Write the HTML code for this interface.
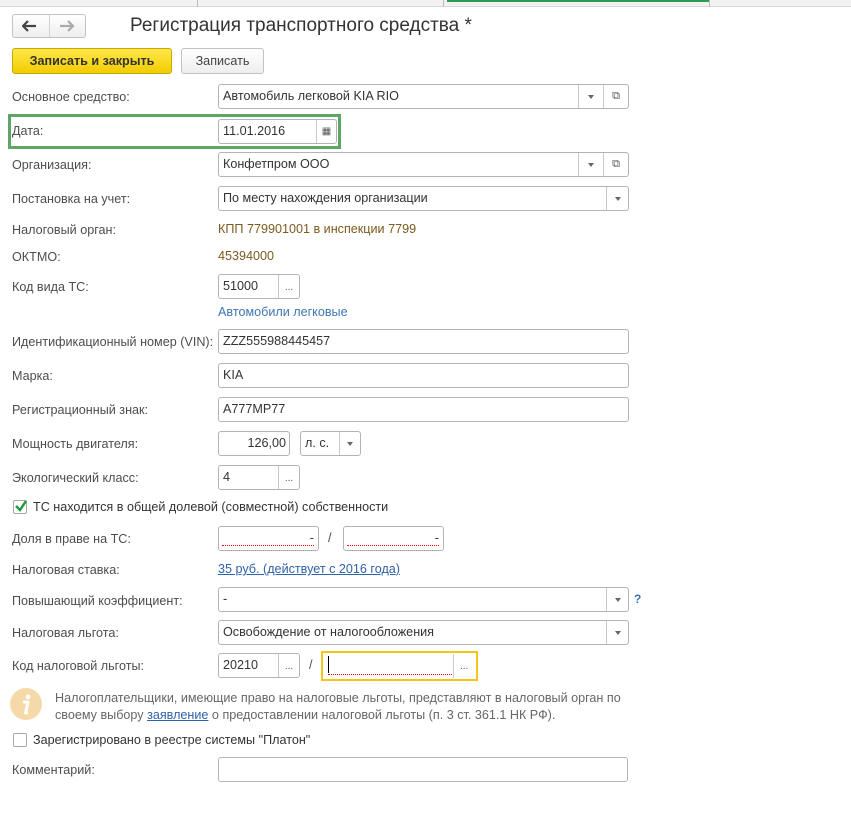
<!DOCTYPE html>
<html><head><meta charset="utf-8"><style>
*{box-sizing:border-box}
body{margin:0;width:851px;height:813px;background:#fff;font-family:"Liberation Sans",Arial,sans-serif;font-size:12.6px;color:#4d4d4d;position:relative;overflow:hidden}
.a{position:absolute}
.l{position:absolute;left:12px;line-height:16px;color:#4d4d4d}
.in{position:absolute;height:25px;border:1px solid #b3b3b3;border-radius:3px;background:#fff;color:#333;line-height:23px;padding-left:4px;white-space:nowrap;overflow:hidden}
.bt{position:absolute;top:0;bottom:0;border-left:1px solid #c8c8c8;text-align:center;color:#555}
.tri{display:inline-block;width:0;height:0;border-left:3px solid transparent;border-right:3px solid transparent;border-top:4px solid #666;vertical-align:middle}
.dots{font-size:10px;color:#555}
.br{color:#7b5a1e}
.lk{color:#3d76b4}
.red{position:absolute;left:3px;right:4px;bottom:4px;border-bottom:1px dotted #e00}
</style></head><body>
<div class="a" style="left:0;top:0;width:851px;height:7px;background:#f2f2f2;border-bottom:1px solid #d8d8d8"></div>
<div class="a" style="left:197px;top:0;width:1px;height:7px;background:#bbb"></div>
<div class="a" style="left:443px;top:0;width:1px;height:7px;background:#bbb"></div>
<div class="a" style="left:447px;top:0;width:262px;height:2px;background:#2e9c4e"></div>
<div class="a" style="left:709px;top:0;width:1px;height:7px;background:#bbb"></div>
<div class="a" style="left:12px;top:14px;width:74px;height:24px;border:1px solid #c3c3c3;border-radius:3px;background:linear-gradient(#fff,#eee)"></div>
<div class="a" style="left:49px;top:15px;width:1px;height:22px;background:#d0d0d0"></div>
<svg class="a" style="left:22px;top:20px" width="18" height="12"><path d="M1 6H14M6 1L1 6L6 11" stroke="#444" stroke-width="2.2" fill="none"/></svg>
<svg class="a" style="left:58px;top:20px" width="18" height="12"><path d="M2 6H15M10 1L15 6L10 11" stroke="#aaa" stroke-width="2.2" fill="none"/></svg>
<div class="a" style="left:130px;top:14px;font-size:19px;color:#333;line-height:24px">Регистрация транспортного средства *</div>
<div class="a" style="left:12px;top:48px;width:160px;height:26px;border:1px solid #c9a800;border-radius:3px;background:linear-gradient(#ffe84a,#f2cc00);text-align:center;line-height:24px;font-weight:bold;color:#333">Записать и закрыть</div>
<div class="a" style="left:181px;top:48px;width:83px;height:26px;border:1px solid #c3c3c3;border-radius:3px;background:linear-gradient(#fff,#eee);text-align:center;line-height:24px;color:#444">Записать</div>

<div class="l" style="top:89px">Основное средство:</div>
<div class="in" style="left:218px;top:84px;width:411px">Автомобиль легковой KIA RIO<div class="bt" style="right:25px;width:25px"><span class="tri"></span></div><div class="bt" style="right:0;width:25px;font-size:11px">&#10697;</div></div>

<div class="a" style="left:8px;top:114px;width:333px;height:35px;border:3px solid #5fa565"></div>
<div class="l" style="top:123px">Дата:</div>
<div class="in" style="left:218px;top:119px;width:119px">11.01.2016<div class="bt" style="right:0;width:20px;font-size:10px">&#9638;</div></div>

<div class="l" style="top:157px">Организация:</div>
<div class="in" style="left:218px;top:152px;width:411px">Конфетпром ООО<div class="bt" style="right:25px;width:25px"><span class="tri"></span></div><div class="bt" style="right:0;width:25px;font-size:11px">&#10697;</div></div>

<div class="l" style="top:191px">Постановка на учет:</div>
<div class="in" style="left:218px;top:186px;width:411px">По месту нахождения организации<div class="bt" style="right:0;width:22px"><span class="tri"></span></div></div>

<div class="l" style="top:222px">Налоговый орган:</div>
<div class="a br" style="left:218px;top:222px">КПП 779901001 в инспекции 7799</div>
<div class="l" style="top:249px">ОКТМО:</div>
<div class="a br" style="left:218px;top:249px">45394000</div>

<div class="l" style="top:279px">Код вида ТС:</div>
<div class="in" style="left:218px;top:274px;width:82px">51000<div class="bt" style="right:0;width:21px"><span class="dots">...</span></div></div>
<div class="a lk" style="left:218px;top:305px">Автомобили легковые</div>

<div class="l" style="top:334px">Идентификационный номер (VIN):</div>
<div class="in" style="left:218px;top:329px;width:411px">ZZZ555988445457</div>
<div class="l" style="top:368px">Марка:</div>
<div class="in" style="left:218px;top:363px;width:411px">KIA</div>
<div class="l" style="top:402px">Регистрационный знак:</div>
<div class="in" style="left:218px;top:397px;width:411px">А777МР77</div>

<div class="l" style="top:436px">Мощность двигателя:</div>
<div class="in" style="left:218px;top:431px;width:72px;text-align:right;padding-right:3px">126,00</div>
<div class="in" style="left:300px;top:431px;width:61px">л. с.<div class="bt" style="right:0;width:21px"><span class="tri"></span></div></div>

<div class="l" style="top:470px">Экологический класс:</div>
<div class="in" style="left:218px;top:465px;width:82px">4<div class="bt" style="right:0;width:21px"><span class="dots">...</span></div></div>

<div class="a" style="left:13px;top:500px;width:14px;height:14px;border:1px solid #a8a8a8;border-radius:2px;background:#fff"></div>
<svg class="a" style="left:14px;top:499px" width="14" height="14"><path d="M2 7L6 11L12 2" stroke="#1c9b3c" stroke-width="2.4" fill="none"/></svg>
<div class="a" style="left:33px;top:500px;color:#333">ТС находится в общей долевой (совместной) собственности</div>

<div class="l" style="top:531px">Доля в праве на ТС:</div>
<div class="in" style="left:218px;top:526px;width:101px;text-align:right;padding-right:4px">-<div class="red"></div></div>
<div class="a" style="left:328px;top:531px">/</div>
<div class="in" style="left:343px;top:526px;width:101px;text-align:right;padding-right:4px">-<div class="red"></div></div>

<div class="l" style="top:562px">Налоговая ставка:</div>
<div class="a" style="left:218px;top:562px;text-decoration:underline;color:#2f62a8">35 руб. (действует с 2016 года)</div>

<div class="l" style="top:593px">Повышающий коэффициент:</div>
<div class="in" style="left:218px;top:587px;width:411px">-<div class="bt" style="right:0;width:22px"><span class="tri"></span></div></div>
<div class="a" style="left:634px;top:592px;color:#3d76b4;font-weight:bold;font-size:12px">?</div>

<div class="l" style="top:625px">Налоговая льгота:</div>
<div class="in" style="left:218px;top:620px;width:411px">Освобождение от налогообложения<div class="bt" style="right:0;width:22px"><span class="tri"></span></div></div>

<div class="l" style="top:658px">Код налоговой льготы:</div>
<div class="in" style="left:218px;top:653px;width:82px">20210<div class="bt" style="right:0;width:21px"><span class="dots">...</span></div></div>
<div class="a" style="left:309px;top:658px">/</div>
<div class="a" style="left:321px;top:651px;width:157px;height:30px;border:2px solid #f5c518;background:#fff"></div>
<div class="a" style="left:328px;top:656px;width:1px;height:17px;background:#000"></div>
<div class="a" style="left:328px;top:674px;width:124px;border-bottom:1px dotted #e00"></div>
<div class="a" style="left:453px;top:654px;width:1px;height:24px;background:#ccc"></div>
<div class="a dots" style="left:460px;top:661px">...</div>

<svg class="a" style="left:10px;top:688px" width="32" height="32"><circle cx="16" cy="16" r="16" fill="#f5d9a8"/><circle cx="18" cy="9" r="2.4" fill="#fff"/><path d="M13 14H18L15.5 25H18" stroke="#fff" stroke-width="3" fill="none" stroke-linejoin="round"/></svg>
<div class="a" style="left:55px;top:690px;line-height:17px;color:#666">Налогоплательщики, имеющие право на налоговые льготы, представляют в налоговый орган по<br>своему выбору <span style="color:#2f62a8;text-decoration:underline">заявление</span> о предоставлении налоговой льготы (п. 3 ст. 361.1 НК РФ).</div>

<div class="a" style="left:13px;top:733px;width:14px;height:14px;border:1px solid #a8a8a8;border-radius:2px;background:#fff"></div>
<div class="a" style="left:33px;top:733px;color:#333">Зарегистрировано в реестре системы "Платон"</div>

<div class="l" style="top:762px">Комментарий:</div>
<div class="in" style="left:218px;top:757px;width:410px"></div>
</body></html>
